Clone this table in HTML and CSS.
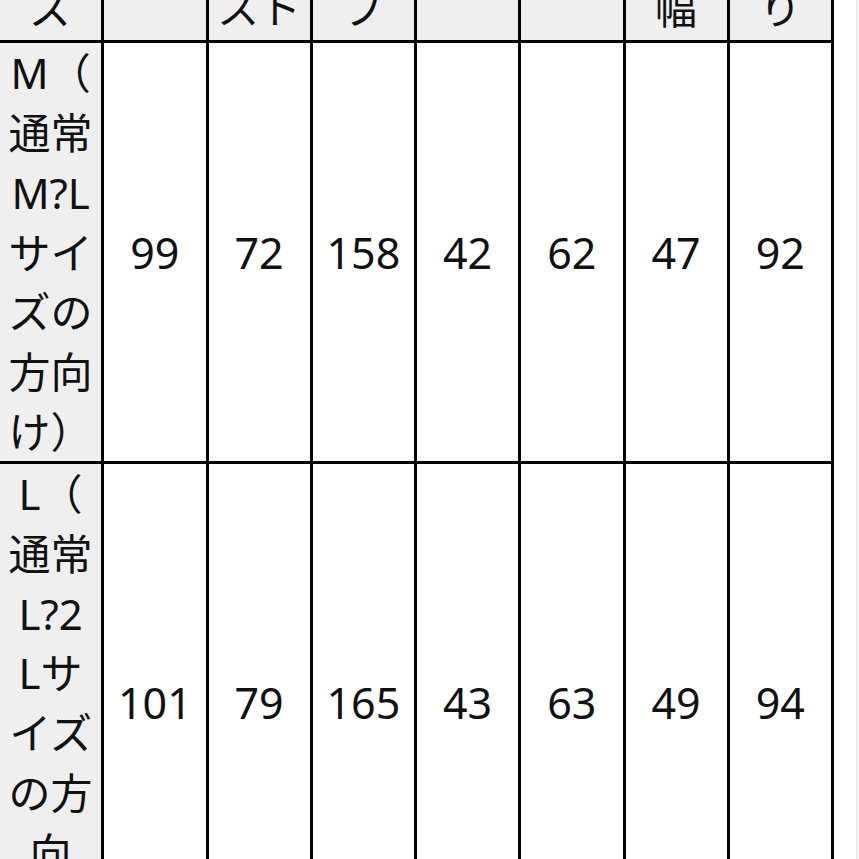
FILE: index.html
```html
<!DOCTYPE html>
<html lang="ja">
<head>
<meta charset="utf-8">
<title>サイズ表</title>
<link rel="stylesheet" href="styles.css">
</head>
<body>
<div class="page">
  <table class="size-table">
    <thead>
      <tr>
        <th>サイ<br>ズ</th>
        <th>着丈</th>
        <th>ウエ<br>スト</th>
        <th>ヒッ<br>プ</th>
        <th>袖丈</th>
        <th>裄丈</th>
        <th>袖口<br>幅</th>
        <th>股回<br>り</th>
      </tr>
    </thead>
    <tbody>
      <tr>
        <th class="row-head">M（<br>通常<br>M?L<br>サイ<br>ズの<br>方向<br>け）</th>
        <td>99</td>
        <td>72</td>
        <td>158</td>
        <td>42</td>
        <td>62</td>
        <td>47</td>
        <td>92</td>
      </tr>
      <tr>
        <th class="row-head">L（<br>通常<br>L?2<br>Lサ<br>イズ<br>の方<br>向<br>け）</th>
        <td>101</td>
        <td>79</td>
        <td>165</td>
        <td>43</td>
        <td>63</td>
        <td>49</td>
        <td>94</td>
      </tr>
    </tbody>
  </table>
</div>
</body>
</html>
```

FILE: styles.css
```css
html, body {
  margin: 0;
  padding: 0;
  background: #f4f4f4;
}

.page {
  width: 856px;
  height: 859px;
  background: #ffffff;
  border-right: 1px solid #e2e2e2;
  overflow: hidden;
}

.size-table {
  border-collapse: collapse;
  table-layout: fixed;
  width: 837px;
  margin-left: -3px;
  margin-top: -90px;
  font-family: "Noto Sans", "Noto Sans CJK JP", sans-serif;
  font-size: 42px;
  line-height: 59.7px;
  color: #111111;
}

.size-table th,
.size-table td {
  border: 3px solid #000000;
  padding: 0;
  text-align: center;
  vertical-align: middle;
  font-weight: normal;
  white-space: nowrap;
}

.size-table thead th {
  background: #efefef;
  padding: 5px 0 3px;
}

.size-table .row-head {
  background: #efefef;
}

.size-table td {
  background: #ffffff;
  font-size: 43px;
}
```
